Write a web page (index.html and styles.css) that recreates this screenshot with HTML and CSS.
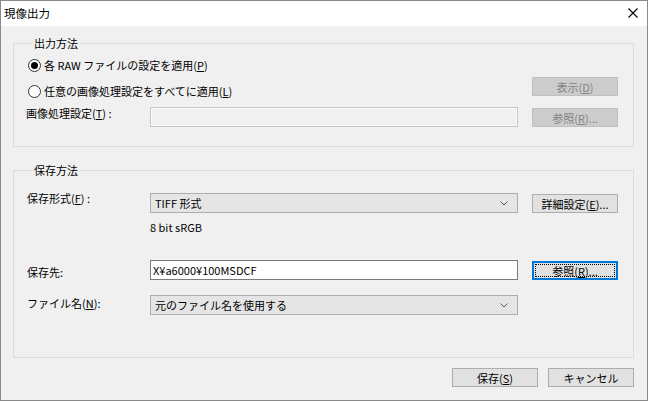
FILE: index.html
```html
<!DOCTYPE html>
<html lang="ja">
<head>
    <meta charset="UTF-8">
    <title>現像出力</title>
    <link rel="stylesheet" href="styles.css">
</head>
<body>
    <div class="window">
        <div class="titlebar">
            <span class="title">現像出力</span>
            <svg class="close" width="10" height="10" viewBox="0 0 10 10">
                <path d="M0.5 0.5 L9.5 9.5 M9.5 0.5 L0.5 9.5" stroke="#000" stroke-width="1.1" fill="none"/>
            </svg>
        </div>

        <div class="content">
            <fieldset class="group group-output">
                <legend>出力方法</legend>

                <div class="row row-radio1">
                    <label class="radio"><span class="dot checked"></span><span>各 RAW ファイルの設定を適用(<u>P</u>)</span></label>
                </div>

                <div class="row row-radio2">
                    <label class="radio"><span class="dot"></span><span>任意の画像処理設定をすべてに適用(<u>L</u>)</span></label>
                    <button class="btn" disabled>表示(<u>D</u>)</button>
                </div>

                <div class="row row-settings">
                    <span class="label">画像処理設定(<u>T</u>) :</span>
                    <span class="field field-disabled"></span>
                    <button class="btn" disabled>参照(<u>R</u>)...</button>
                </div>
            </fieldset>

            <fieldset class="group group-save">
                <legend>保存方法</legend>

                <div class="row row-format">
                    <span class="label">保存形式(<u>F</u>) :</span>
                    <span class="select">TIFF 形式
                        <svg class="chevron" width="8" height="5" viewBox="0 0 8 5"><path d="M0.5 0.5 L4 4 L7.5 0.5" stroke="#555" fill="none"/></svg>
                    </span>
                    <button class="btn">詳細設定(<u>E</u>)...</button>
                </div>

                <div class="row row-info">
                    <span class="info">8 bit sRGB</span>
                </div>

                <div class="row row-dest">
                    <span class="label">保存先:</span>
                    <span class="field">X¥a6000¥100MSDCF</span>
                    <button class="btn focus">参照(<u>R</u>)...</button>
                </div>

                <div class="row row-name">
                    <span class="label">ファイル名(<u>N</u>):</span>
                    <span class="select">元のファイル名を使用する
                        <svg class="chevron" width="8" height="5" viewBox="0 0 8 5"><path d="M0.5 0.5 L4 4 L7.5 0.5" stroke="#555" fill="none"/></svg>
                    </span>
                </div>
            </fieldset>

            <div class="footer">
                <button class="btn">保存(<u>S</u>)</button>
                <button class="btn">キャンセル</button>
            </div>
        </div>
    </div>
</body>
</html>
```

FILE: styles.css
```css
* {
    margin: 0;
    padding: 0;
    box-sizing: border-box;
}

body {
    font-family: "Noto Sans CJK JP", "Noto Sans", sans-serif;
    font-size: 11px;
    line-height: 14px;
    color: #000;
    background: #fff;
}

u {
    text-decoration: underline;
    text-underline-offset: 1px;
}

.window {
    width: 648px;
    height: 401px;
    border: 1px solid #8a8a8a;
    display: flex;
    flex-direction: column;
    background: #f0f0f0;
}

.titlebar {
    height: 25px;
    background: #fff;
    display: flex;
    align-items: center;
    justify-content: space-between;
    padding: 0 9px 2px 3px;
    font-size: 11.5px;
}

.close {
    display: block;
    margin-top: 1px;
}

.content {
    flex: 1;
    padding: 0 13px 0 12px;
}

.group {
    border: 1px solid #dcdcdc;
    padding: 0 15px 0 12px;
}

.group legend {
    margin-left: 6px;
    padding: 0 2px;
    line-height: 14px;
}

.group-output {
    margin-top: 10px;
    padding-top: 8px;
    padding-bottom: 19px;
}

.group-save {
    margin-top: 16px;
    padding-top: 14px;
    padding-bottom: 42px;
}

.row {
    display: grid;
    grid-template-columns: 110px 368px 86px;
    column-gap: 14px;
    align-items: start;
}

.label {
    white-space: nowrap;
}

.radio {
    grid-column: 1 / 3;
    display: flex;
    align-items: center;
    gap: 3px;
    margin-left: 2px;
    white-space: nowrap;
}

.dot {
    width: 13px;
    height: 13px;
    border: 1px solid #333;
    border-radius: 50%;
    background: #fff;
    display: flex;
    align-items: center;
    justify-content: center;
}

.dot.checked::after {
    content: "";
    width: 7px;
    height: 7px;
    border-radius: 50%;
    background: #000;
}

.btn {
    grid-column: 3;
    width: 86px;
    height: 19px;
    font: inherit;
    color: #000;
    background: #e1e1e1;
    border: 1px solid #adadad;
    display: flex;
    align-items: center;
    justify-content: center;
}

.btn:disabled {
    background: #cccccc;
    border-color: #bfbfbf;
    color: #838383;
}

.btn.focus {
    border: 2px solid #0078d7;
    outline: 1px dotted #000;
    outline-offset: -4px;
}

.field {
    height: 20px;
    border: 1px solid #7a7a7a;
    background: #fff;
    padding: 0 2px;
    line-height: 18px;
}

.field-disabled {
    border-color: #c6c6c6;
    background: #f0f0f0;
    box-shadow: inset 0 0 0 1px #fafafa;
}

.select {
    height: 20px;
    border: 1px solid #adadad;
    background: #e5e5e5;
    padding: 0 9px 0 4px;
    display: flex;
    align-items: center;
    justify-content: space-between;
}

.chevron {
    display: block;
}

/* 出力方法 rows */
.row-radio1 {
    height: 14px;
}

.row-radio2 {
    margin-top: 5px;
}

.row-radio2 .radio {
    margin-top: 7px;
}

.row-settings {
    margin-top: 8px;
}

.row-settings .field {
    margin-top: 1px;
}

.row-settings .btn {
    margin-top: 2px;
}

/* 保存方法 rows */
.row-format .select {
    margin-top: 2px;
}

.row-format .btn {
    margin-top: 3px;
}

.row-format .label {
    margin-left: 1px;
}

.row-info {
    margin-top: 7px;
}

.info {
    grid-column: 2;
}

.row-dest {
    margin-top: 26px;
}

.row-dest .label {
    margin-top: 5px;
    margin-left: 1px;
}

.row-dest .btn {
    margin-top: 1px;
}

.row-name {
    margin-top: 15px;
}

.row-name .label {
    margin-top: 1px;
    margin-left: 1px;
}

.footer {
    display: flex;
    justify-content: flex-end;
    gap: 10px;
    margin-top: 10px;
}
```
